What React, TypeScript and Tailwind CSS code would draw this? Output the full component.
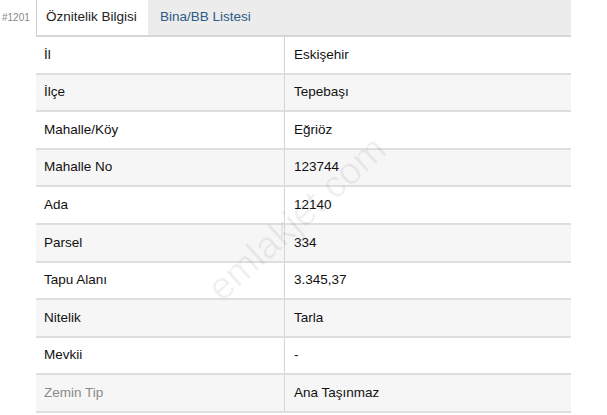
import React from "react";

const rows: [string, string][] = [
  ["İl", "Eskişehir"],
  ["İlçe", "Tepebaşı"],
  ["Mahalle/Köy", "Eğriöz"],
  ["Mahalle No", "123744"],
  ["Ada", "12140"],
  ["Parsel", "334"],
  ["Tapu Alanı", "3.345,37"],
  ["Nitelik", "Tarla"],
  ["Mevkii", "-"],
  ["Zemin Tip", "Ana Taşınmaz"],
];

export default function App() {
  return (
    <div
      className="relative w-[607px] h-[415px] overflow-hidden bg-white text-[13.5px] text-[#111]"
      style={{ fontFamily: '"Liberation Sans", Arial, sans-serif' }}
    >
      <div className="ml-[36px] w-[535px]">
        <div className="flex h-[37px] bg-[#ececec] border-b-2 border-[#d6d6d6]">
          <div className="w-[112px] bg-white border-l border-[#d0d0d0] flex items-center pl-[9px] text-[#222]">
            Öznitelik Bilgisi
          </div>
          <div className="flex items-center pl-[12px] text-[#2b5b86]">Bina/BB Listesi</div>
        </div>
        {rows.map(([k, v], i) => (
          <div
            key={k}
            className={`flex h-[37.6px] border-b-2 border-[#dedede] ${i % 2 === 1 ? "bg-[#f6f6f6]" : "bg-white"}`}
          >
            <div
              className={`w-[249px] border-r border-[#d4d4d4] flex items-center pl-[8px] ${i === 9 ? "text-[#8a8a8a]" : ""}`}
            >
              {k}
            </div>
            <div className="flex items-center pl-[9px]">{v}</div>
          </div>
        ))}
      </div>
      <div className="absolute left-[2px] top-[10px] text-[10px] text-[#888]">#1201</div>
      <div
        className="absolute left-[185px] top-[190px] text-[38px] text-[#000]/[0.06] whitespace-nowrap -rotate-[42deg]"
        style={{ fontFamily: '"Liberation Sans", Arial, sans-serif' }}
      >
        emlakjet.com
      </div>
    </div>
  );
}
